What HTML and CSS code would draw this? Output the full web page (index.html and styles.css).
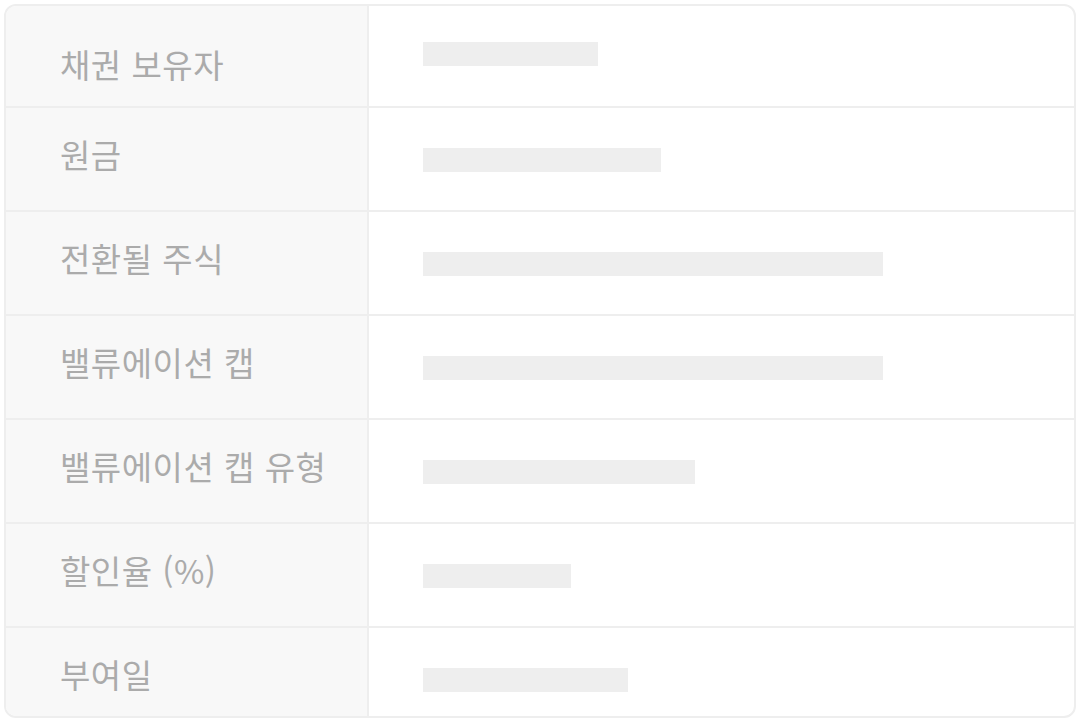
FILE: index.html
```html
<!DOCTYPE html>
<html lang="ko">
<head>
<meta charset="utf-8">
<link rel="stylesheet" href="styles.css">
</head>
<body>
<div class="table">
  <div class="row"><div class="label">채권 보유자</div><div class="value"><div class="bar" style="width:175px"></div></div></div>
  <div class="row"><div class="label">원금</div><div class="value"><div class="bar" style="width:238px"></div></div></div>
  <div class="row"><div class="label">전환될 주식</div><div class="value"><div class="bar" style="width:460px"></div></div></div>
  <div class="row"><div class="label">밸류에이션 캡</div><div class="value"><div class="bar" style="width:460px"></div></div></div>
  <div class="row"><div class="label">밸류에이션 캡 유형</div><div class="value"><div class="bar" style="width:272px"></div></div></div>
  <div class="row"><div class="label">할인율 (%)</div><div class="value"><div class="bar" style="width:148px"></div></div></div>
  <div class="row"><div class="label">부여일</div><div class="value"><div class="bar" style="width:205px"></div></div></div>
</div>
</body>
</html>
```

FILE: styles.css
```css
html, body {
  margin: 0;
  padding: 0;
  background: #ffffff;
}
body {
  padding: 4px 0 0 4px;
  font-family: "Noto Sans CJK KR", "Noto Sans", "Liberation Sans", sans-serif;
}
.table {
  box-sizing: border-box;
  width: 1072px;
  height: 714px;
  border: 2px solid #eeeeee;
  border-radius: 12px;
  overflow: hidden;
  display: flex;
  flex-direction: column;
  background: #ffffff;
}
.row {
  flex: 0 0 auto;
  display: grid;
  grid-template-columns: 363px 1fr;
  height: 102px;
  border-top: 2px solid #eeeeee;
}
.row:first-child {
  border-top: none;
  height: 100px;
}
.label {
  background: #f8f8f8;
  border-right: 2px solid #eeeeee;
  padding: 24px 0 0 54px;
  font-size: 33px;
  font-weight: 400;
  line-height: 44px;
  color: #ababab;
  letter-spacing: 0.5px;
  white-space: nowrap;
}
.row:first-child .label {
  padding-top: 36px;
}
.value {
  padding: 40px 0 0 54px;
}
.row:first-child .value {
  padding-top: 36px;
}
.bar {
  height: 24px;
  background: #eeeeee;
}
```
